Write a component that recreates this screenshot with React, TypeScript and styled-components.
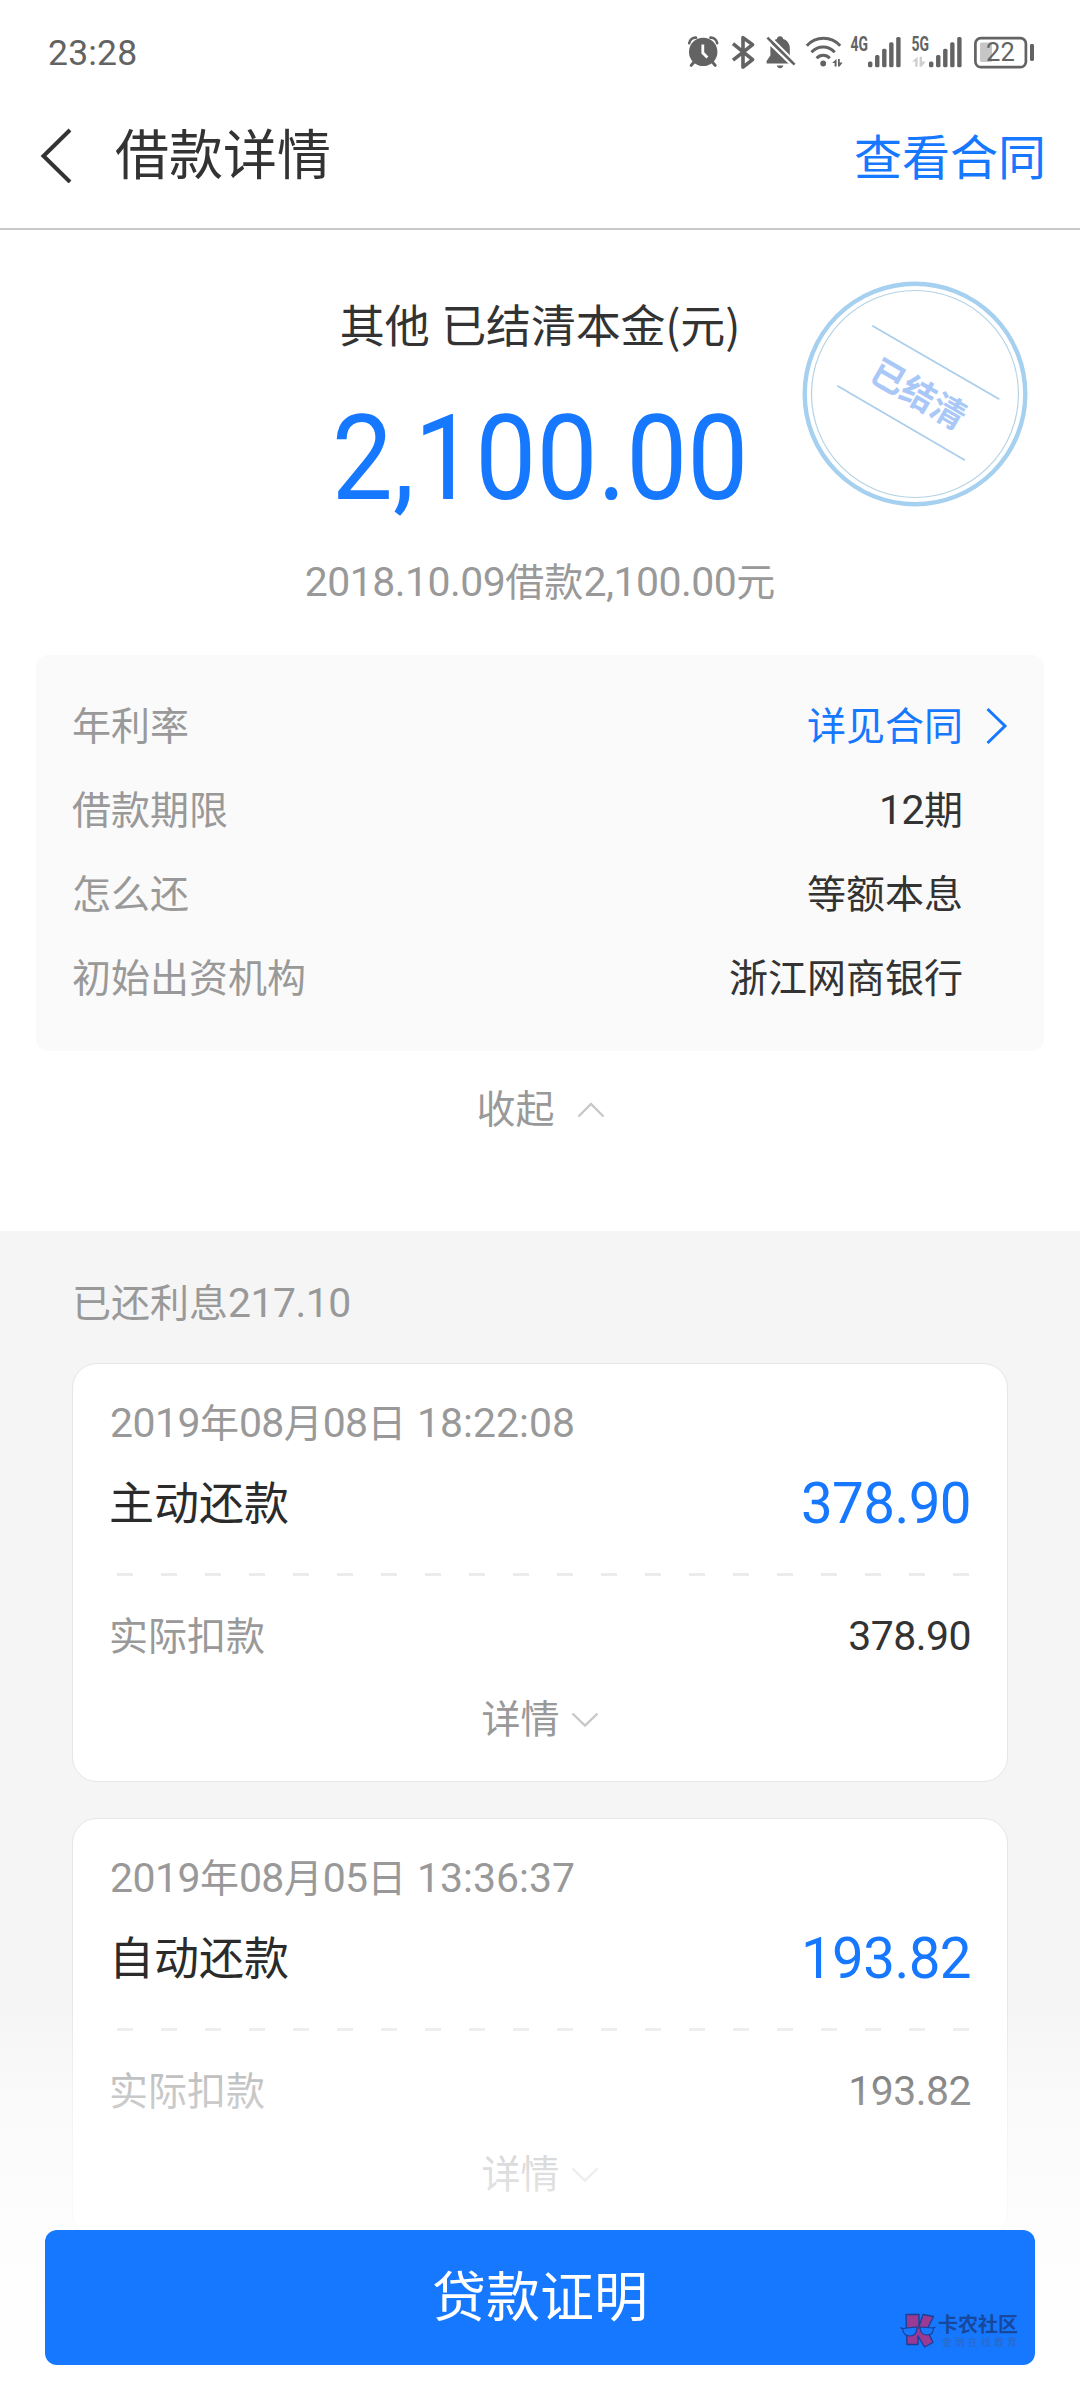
import React from "react";
import styled, { createGlobalStyle } from "styled-components";

const BLUE = "#1677ff";
const INK = "#333333";
const MUTED = "#999999";
const STATUS = "#636363";

const GlobalStyle = createGlobalStyle`
  * { box-sizing: border-box; }
  html, body { margin: 0; padding: 0; background: #fff; }
  body { font-family: "Noto Sans CJK SC", "Noto Sans", sans-serif; color: ${INK}; }
`;

const Screen = styled.div`
  position: relative;
  width: 1080px;
  height: 2400px;
  overflow: hidden;
  display: flex;
  flex-direction: column;
  background: #fff;
`;

const Num = styled.span<{ $track?: number; $before?: number }>`
  font-family: Roboto, "Noto Sans", sans-serif;
  font-size: 1.05em;
  line-height: 1;
  letter-spacing: ${(p) => p.$track ?? -0.5}px;
  margin-left: ${(p) => p.$before ?? 0}px;
`;

/* ---------- status bar ---------- */

const StatusBar = styled.header`
  flex: none;
  height: 104px;
  padding: 36px 46px 0 48px;
  display: flex;
  justify-content: space-between;
  align-items: flex-start;
`;

const Clock = styled.time`
  font-family: Roboto, sans-serif;
  font-size: 35.5px;
  line-height: 34px;
  letter-spacing: 0.2px;
  color: ${STATUS};
`;

const StatusIcons = styled.div`
  display: flex;
  align-items: flex-start;
`;

const StatusIcon = styled.svg<{ $gap: number }>`
  display: block;
  margin-left: ${(p) => p.$gap}px;
  overflow: visible;
`;

/* ---------- title bar ---------- */

const NavBar = styled.nav`
  flex: none;
  height: 126px;
  padding: 0 34px 22px 40px;
  display: flex;
  align-items: center;
  border-bottom: 2px solid #c9c9c9;
`;

const Title = styled.h1`
  margin: 0 auto 0 43px;
  font-size: 54px;
  line-height: 80px;
  font-weight: 400;
  padding-bottom: 7px;
`;

const NavLink = styled.a`
  font-size: 48px;
  line-height: 72px;
  padding-bottom: 3px;
  color: ${BLUE};
`;

/* ---------- summary ---------- */

const Summary = styled.section`
  position: relative;
  flex: none;
  height: 1001px;
  padding: 60px 36px 0;
  display: flex;
  flex-direction: column;
  align-items: center;
`;

const SummaryTitle = styled.h2`
  margin: 0;
  font-size: 45px;
  font-weight: 400;
  line-height: 68px;
  word-spacing: 2px;
  letter-spacing: -0.2px;
`;

const Amount = styled.div`
  margin-top: 31px;
  height: 140px;
  font-family: Roboto, sans-serif;
  font-size: 118.5px;
  line-height: 140px;
  color: ${BLUE};
  transform: scaleX(0.917);
`;

const SummaryNote = styled.p`
  margin: 20px 0 0;
  font-size: 39px;
  line-height: 60px;
  color: ${MUTED};
`;

const Stamp = styled.svg`
  position: absolute;
  left: 802px;
  top: 51px;
`;

const InfoPanel = styled.dl`
  width: 100%;
  height: 396px;
  margin: 46px 0 0;
  padding: 26px 36px 0;
  border-radius: 12px;
  background: #fafafa;
`;

const InfoRow = styled.div`
  height: 84px;
  display: flex;
  align-items: center;
  font-size: 39px;
`;

const InfoLabel = styled.dt`
  color: ${MUTED};
`;

const InfoValue = styled.dd<{ $link?: boolean }>`
  margin: 0 0 0 auto;
  color: ${(p) => (p.$link ? BLUE : INK)};
`;

const InfoTail = styled.span`
  width: 45px;
  padding-top: 5px;
  display: flex;
  justify-content: flex-end;
`;

const Toggle = styled.button<{ $gap: number; $drop: number }>`
  border: 0;
  padding: 0;
  background: none;
  display: flex;
  align-items: center;
  gap: ${(p) => p.$gap}px;
  font: inherit;
  font-size: 39px;
  line-height: 60px;
  color: ${MUTED};

  svg {
    margin-top: ${(p) => p.$drop}px;
  }
`;

const FoldRow = styled.div`
  margin: 25px 0 0 1px;
`;

/* ---------- repayment records ---------- */

const Records = styled.section`
  flex: 1;
  min-height: 0;
  padding: 39px 72px 0;
  background: #f5f5f5;
`;

const InterestLine = styled.p`
  margin: 0 0 33px;
  font-size: 39px;
  line-height: 60px;
  color: ${MUTED};
`;

const Card = styled.article`
  height: 419px;
  margin-bottom: 36px;
  padding: 26px 36px 0 36px;
  border: 1px solid #e6e6e6;
  border-radius: 25px;
  background: #fff;
  display: flex;
  flex-direction: column;
`;

const CardDate = styled.div`
  padding-left: 1px;
  font-size: 39px;
  line-height: 60px;
  color: ${MUTED};
`;

const CardRow = styled.div<{ $top: number }>`
  margin-top: ${(p) => p.$top}px;
  height: 64px;
  display: flex;
  justify-content: space-between;
  align-items: center;
`;

const CardTitle = styled.h3`
  margin: 0;
  font-size: 45px;
  font-weight: 400;
  line-height: 64px;
  color: #2b2b2b;
`;

const CardAmount = styled.span`
  padding-top: 5px;
  font-family: Roboto, sans-serif;
  font-size: 56.5px;
  line-height: 64px;
  letter-spacing: -0.6px;
  color: ${BLUE};
`;

const Dashes = styled.div`
  height: 3px;
  margin: 40px -1px 0 8px;
  background: repeating-linear-gradient(90deg, #ebebeb 0 16px, transparent 16px 44px);
`;

const RowLabel = styled.span`
  font-size: 39px;
  line-height: 60px;
  color: ${MUTED};
`;

const RowValue = styled.span`
  font-size: 39px;
  line-height: 60px;
  color: ${INK};
`;

const CardToggle = styled.div`
  margin: 21px 0 0 0;
  display: flex;
  justify-content: center;
`;

/* ---------- bottom action ---------- */

const BottomBar = styled.footer`
  position: absolute;
  left: 0;
  right: 0;
  bottom: 0;
  height: 400px;
  padding: 0 45px 35px;
  display: flex;
  align-items: flex-end;
  background: linear-gradient(
    180deg,
    rgba(255, 255, 255, 0) 0px,
    rgba(255, 255, 255, 0.45) 90px,
    rgba(255, 255, 255, 0.68) 174px,
    rgba(255, 255, 255, 0.82) 230px,
    rgba(255, 255, 255, 0.96) 364px,
    #fff 400px
  );
`;

const ActionButton = styled.button`
  position: relative;
  width: 100%;
  height: 135px;
  border: 0;
  border-radius: 12px;
  background: ${BLUE};
  color: #fff;
  font-family: inherit;
  font-size: 54px;
  line-height: 80px;
  padding: 0 0 7px;
`;

const Watermark = styled.div`
  position: absolute;
  right: 16px;
  bottom: 16px;
  display: flex;
  align-items: flex-start;
  gap: 2px;
`;

const WatermarkText = styled.div`
  display: flex;
  flex-direction: column;
  text-align: left;
  width: 81px;
  padding-top: 1px;
`;

const WatermarkName = styled.span`
  font-size: 20px;
  line-height: 20px;
  font-weight: 700;
  white-space: nowrap;
  color: #17489c;
`;

const WatermarkTag = styled.span`
  padding: 2px 0 0 4px;
  font-size: 10px;
  line-height: 12px;
  letter-spacing: 3px;
  white-space: nowrap;
  color: #2c69c4;
`;

function Chevron({ up }: { up?: boolean }) {
  return (
    <svg width="28" height="16" viewBox="0 0 28 16" fill="none">
      <path d={up ? "M1.5 14.5 14 2 26.5 14.5" : "M1.5 1.5 14 13.5 26.5 1.5"} stroke="#c8c8c8" strokeWidth="2.4" />
    </svg>
  );
}

function SignalBars() {
  const tops = [25.5, 19, 12.7, 6.3, 1];
  return (
    <>
      {tops.map((t, i) => (
        <rect key={t} x={18 + i * 7.05} y={t} width="4.4" height={31.3 - t} rx="1.6" fill={STATUS} />
      ))}
    </>
  );
}

function NetLabel({ children }: { children: string }) {
  return (
    <text
      x="0.5"
      y="15"
      textLength="17.5"
      lengthAdjust="spacingAndGlyphs"
      fontFamily="Roboto, sans-serif"
      fontWeight="700"
      fontSize="19.5"
      fill={STATUS}
    >
      {children}
    </text>
  );
}

function Status() {
  return (
    <StatusBar>
      <Clock>23:28</Clock>
      <StatusIcons>
        <StatusIcon $gap={0} width="30" height="34" viewBox="0 0 30 34" fill="none">
          <circle cx="15.2" cy="15.9" r="14.2" fill={STATUS} />
          <path d="M1.2 7.2C1.8 3.6 4.6 1.4 8 1.6M29.2 7.2C28.6 3.6 25.8 1.4 22.4 1.6" stroke={STATUS} strokeWidth="2.6" strokeLinecap="round" />
          <path d="M6 26 3.2 29.4M24.4 26l2.8 3.4" stroke={STATUS} strokeWidth="3" strokeLinecap="round" />
          <path d="M14.8 8.6v8.2l4.6 4.6" stroke="#fff" strokeWidth="2.8" />
        </StatusIcon>
        <StatusIcon $gap={14} width="22" height="34" viewBox="0 0 22 34" fill="none">
          <path d="M1 7.6 20.6 23.6 11 31.2V1.6l9.6 7L1 24.2" stroke={STATUS} strokeWidth="3.6" strokeLinejoin="round" />
        </StatusIcon>
        <StatusIcon $gap={12} width="30" height="34" viewBox="0 0 30 34" fill="none">
          <path d="M14 .3c1.8 0 3 1.1 3.2 2.6 4 1.3 6.6 4.7 6.6 9.1v7.6l3.6 5.4v2.4H.6v-2.4L4.4 19.6V12c0-4.4 2.6-7.8 6.5-9.1C11.1 1.4 12.3.3 14 .3Z" fill={STATUS} />
          <path d="M10.8 29.5h6.6c-.5 1.8-1.7 2.7-3.3 2.7s-2.8-.9-3.3-2.7Z" fill={STATUS} />
          <path d="M-1 3.2 29 32.2M3 0 30 27" stroke="#fff" strokeWidth="2.4" />
          <path d="M1.4 1.6 28.6 28.7" stroke={STATUS} strokeWidth="2.6" />
        </StatusIcon>
        <StatusIcon $gap={10} width="36" height="34" viewBox="0 0 36 34" fill="none">
          <path d="M.8 9.8C9.8-.2 25.2-.2 34.2 9.8M5.5 16.3c6.2-7.1 17-7.1 23.2 0M10.6 22.2c3.6-4 9.6-4 13.2 0" stroke={STATUS} strokeWidth="3" />
          <circle cx="17.2" cy="27.5" r="2.9" fill={STATUS} />
          <path d="M26 27l4.6-4v7.4h-2V27ZM32 23v7.4h1.6l3-4h-2.8V23Z" fill={STATUS} />
        </StatusIcon>
        <StatusIcon $gap={8} width="51" height="34" viewBox="0 0 51 34" fill="none">
          <NetLabel>4G</NetLabel>
          <SignalBars />
        </StatusIcon>
        <StatusIcon $gap={10} width="51" height="34" viewBox="0 0 51 34" fill="none">
          <NetLabel>5G</NetLabel>
          <path d="M1 25.500l5.600-4.800v10H4.200v-5.200ZM8.600 20.700v10h2l4.200-5.200H11v-4.800Z" fill="#cfcfcf" />
          <SignalBars />
        </StatusIcon>
        <StatusIcon $gap={12} width="60" height="34" viewBox="0 0 60 34" fill="none">
          <rect x="6" y="6.5" width="12" height="19.5" rx="1.5" fill="#c6c6c6" />
          <rect x="1.4" y="2.2" width="50.5" height="29" rx="5.5" stroke={STATUS} strokeWidth="2.7" />
          <rect x="56" y="8" width="4" height="17" rx="1.4" fill={STATUS} />
          <text x="26.4" y="25.3" textAnchor="middle" fontFamily="Roboto, sans-serif" fontSize="25.5" fill={STATUS}>
            22
          </text>
        </StatusIcon>
      </StatusIcons>
    </StatusBar>
  );
}

function SettledStamp() {
  return (
    <Stamp width="226" height="226" viewBox="0 0 226 226" fill="none">
      <circle cx="113" cy="113" r="110.3" stroke="#a6d0f0" strokeWidth="4.4" />
      <circle cx="113" cy="113" r="103.5" stroke="#b4d2e4" strokeWidth="1.2" />
      <path d="M70.3 44.7 197.3 118.300M35.3 104.7 163 179.3" stroke="#a9cdea" strokeWidth="1.6" />
      <text
        transform="translate(116.5 113) rotate(30)"
        y="12.5"
        textAnchor="middle"
        fontSize="34.5"
        fontWeight="700"
        fill="#a9c8f8"
      >
        已结清
      </text>
    </Stamp>
  );
}

type RecordProps = { date: string[]; time: string; title: string; amount: string };

function RecordCard({ date, time, title, amount }: RecordProps) {
  return (
    <Card>
      <CardDate>
        <Num>{date[0]}</Num>年<Num $track={-0.7}>{date[1]}</Num>月<Num $track={-0.7}>{date[2]}</Num>日{" "}
        <Num $track={0} $before={2}>
          {time}
        </Num>
      </CardDate>
      <CardRow $top={19}>
        <CardTitle>{title}</CardTitle>
        <CardAmount>{amount}</CardAmount>
      </CardRow>
      <Dashes />
      <CardRow $top={25}>
        <RowLabel>实际扣款</RowLabel>
        <RowValue>
          <Num>{amount}</Num>
        </RowValue>
      </CardRow>
      <CardToggle>
        <Toggle $gap={11} $drop={8}>
          详情
          <Chevron />
        </Toggle>
      </CardToggle>
    </Card>
  );
}

function WatermarkLogo() {
  return (
    <svg width="36" height="36" viewBox="0 0 36 36">
      <g fill="#9a3a92" stroke="#1c3f96" strokeWidth="1.4" strokeLinejoin="round">
        <path d="M6 1.5h13v12L23 1.5l10.5 2-6.5 13 6 13-8.5 4.5-6.5-11v8.5H7Z" />
      </g>
      <g fill={BLUE} stroke="#1c3f96" strokeWidth="1.2">
        <path d="M2.5 15.5 17 14c.3 5.5-2.5 9-7 9s-7-3-7.500-7.500Z" />
        <path d="M20 14l13.5 1c0 4.500-2.500 7-6.500 7s-7-3-7-8Z" />
        <path d="M.5 14.5l2.500 1.500M17 15h3M33.500 15l2-1" />
      </g>
    </svg>
  );
}

export default function App() {
  return (
    <Screen>
      <GlobalStyle />
      <Status />
      <NavBar>
        <svg width="32" height="56" viewBox="0 0 32 56" fill="none">
          <path d="M30 3 3.500 29 30 55" stroke={INK} strokeWidth="4" />
        </svg>
        <Title>借款详情</Title>
        <NavLink>查看合同</NavLink>
      </NavBar>

      <Summary>
        <SummaryTitle>其他 已结清本金(元)</SummaryTitle>
        <Amount>2,100.00</Amount>
        <SummaryNote>
          <Num>2018.10.09</Num>借款<Num>2,100.00</Num>元
        </SummaryNote>
        <SettledStamp />
        <InfoPanel>
          <InfoRow>
            <InfoLabel>年利率</InfoLabel>
            <InfoValue $link>详见合同</InfoValue>
            <InfoTail>
              <svg width="22" height="38" viewBox="0 0 22 38" fill="none">
                <path d="M1.5 2 19 19 1.5 36" stroke={BLUE} strokeWidth="3" />
              </svg>
            </InfoTail>
          </InfoRow>
          <InfoRow>
            <InfoLabel>借款期限</InfoLabel>
            <InfoValue>
              <Num>12</Num>期
            </InfoValue>
            <InfoTail />
          </InfoRow>
          <InfoRow>
            <InfoLabel>怎么还</InfoLabel>
            <InfoValue>等额本息</InfoValue>
            <InfoTail />
          </InfoRow>
          <InfoRow>
            <InfoLabel>初始出资机构</InfoLabel>
            <InfoValue>浙江网商银行</InfoValue>
            <InfoTail />
          </InfoRow>
        </InfoPanel>
        <FoldRow>
          <Toggle $gap={22} $drop={7}>
            收起
            <Chevron up />
          </Toggle>
        </FoldRow>
      </Summary>

      <Records>
        <InterestLine>
          已还利息<Num>217.10</Num>
        </InterestLine>
        <RecordCard date={["2019", "08", "08"]} time="18:22:08" title="主动还款" amount="378.90" />
        <RecordCard date={["2019", "08", "05"]} time="13:36:37" title="自动还款" amount="193.82" />
      </Records>

      <BottomBar>
        <ActionButton>
          贷款证明
          <Watermark>
            <WatermarkLogo />
            <WatermarkText>
              <WatermarkName>卡农社区</WatermarkName>
              <WatermarkTag>金融在线教育</WatermarkTag>
            </WatermarkText>
          </Watermark>
        </ActionButton>
      </BottomBar>
    </Screen>
  );
}
